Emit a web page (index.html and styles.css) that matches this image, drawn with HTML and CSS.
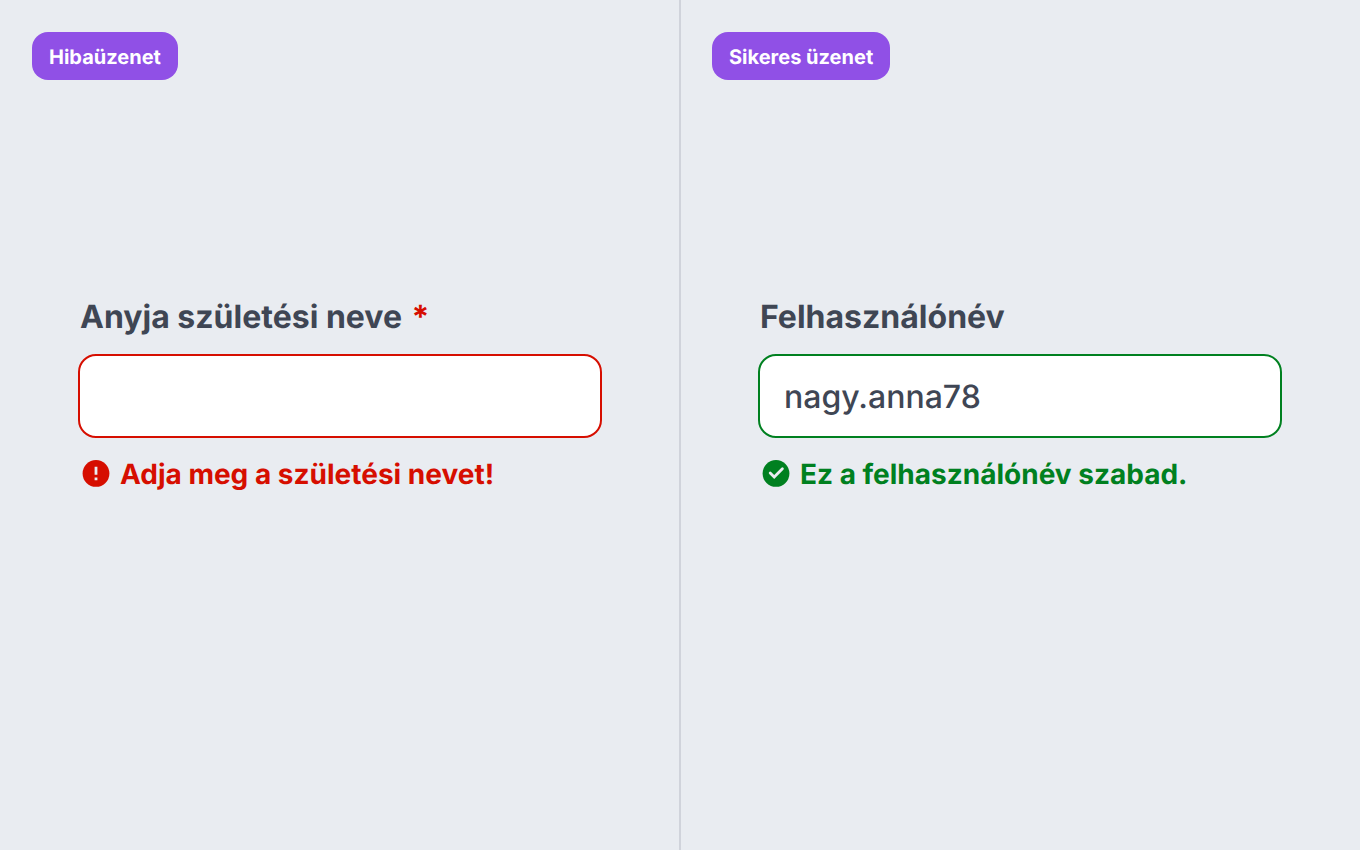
FILE: index.html
```html
<!DOCTYPE html>
<html lang="hu">
<head>
    <meta charset="UTF-8">
    <meta name="viewport" content="width=device-width, initial-scale=1.0">
    <title>Űrlap üzenetek</title>
    <link rel="stylesheet" href="styles.css">
</head>
<body>
    <main class="examples">
        <section class="example">
            <h2 class="tag">Hibaüzenet</h2>
            <div class="field error">
                <label for="motherName">Anyja születési neve <span class="required">*</span></label>
                <input type="text" id="motherName" required aria-invalid="true" aria-describedby="motherNameMessage">
                <p class="message" id="motherNameMessage">
                    <svg class="icon" viewBox="0 0 28 28" aria-hidden="true">
                        <circle cx="14" cy="13.4" r="13.4" fill="currentColor"/>
                        <path d="M12.6 6.7h2.8v8h-2.8zM12.6 17.4h2.8v2.8h-2.8z" fill="#e9ecf1"/>
                    </svg>
                    Adja meg a születési nevet!
                </p>
            </div>
        </section>
        <section class="example">
            <h2 class="tag">Sikeres üzenet</h2>
            <div class="field success">
                <label for="username">Felhasználónév</label>
                <input type="text" id="username" value="nagy.anna78" aria-describedby="usernameMessage">
                <p class="message" id="usernameMessage">
                    <svg class="icon" viewBox="0 0 28 28" aria-hidden="true">
                        <circle cx="14" cy="13.4" r="13.4" fill="currentColor"/>
                        <path d="M8.2 12.9l4 4 8.2-8.2" fill="none" stroke="#e9ecf1" stroke-width="2.8" stroke-linecap="round"/>
                    </svg>
                    Ez a felhasználónév szabad.
                </p>
            </div>
        </section>
    </main>
</body>
</html>
```
FILE: styles.css
```css
* {
    box-sizing: border-box;
}

body {
    font-family: Inter, sans-serif;
    text-rendering: geometricPrecision;
    background-color: #e9ecf1;
    color: #3f4654;
    margin: 0;
}

.examples {
    display: grid;
    grid-template-columns: 1fr 1fr;
    min-height: 100vh;
}

.example {
    display: grid;
    grid-template-rows: 1fr auto 1fr;
    padding: 32px 32px 94px;
}

.example:first-child {
    border-right: 2px solid #d0d3db;
    margin-right: -1px;
    padding-right: 31px;
}

.tag {
    align-self: start;
    justify-self: start;
    margin: 0;
    padding: 13px 17px 11px;
    border-radius: 16px;
    background-color: #9050e6;
    color: #fff;
    font-size: 20px;
    line-height: 24px;
    font-weight: 700;
}

.field {
    padding: 0 46px;
}

.field label {
    display: block;
    margin: 0 2px 16px;
    font-size: 32px;
    line-height: 42px;
    font-weight: 700;
}

.required {
    margin-left: 2px;
}

.field input {
    display: block;
    width: 100%;
    height: 84px;
    padding: 0 24px;
    border: 2px solid;
    border-radius: 18px;
    background-color: #fff;
    color: #3f4654;
    font-family: inherit;
    font-size: 32px;
    font-weight: 500;
    text-rendering: inherit;
}

.message {
    display: flex;
    align-items: center;
    gap: 10px;
    margin: 18px 4px 0;
    font-size: 28px;
    line-height: 36px;
    font-weight: 700;
}

.icon {
    width: 28px;
    height: 28px;
}

.error input {
    border-color: #d60e00;
}

.error .message,
.required {
    color: #d60e00;
}

.success input {
    border-color: #008020;
}

.success .message {
    color: #008020;
}
```
